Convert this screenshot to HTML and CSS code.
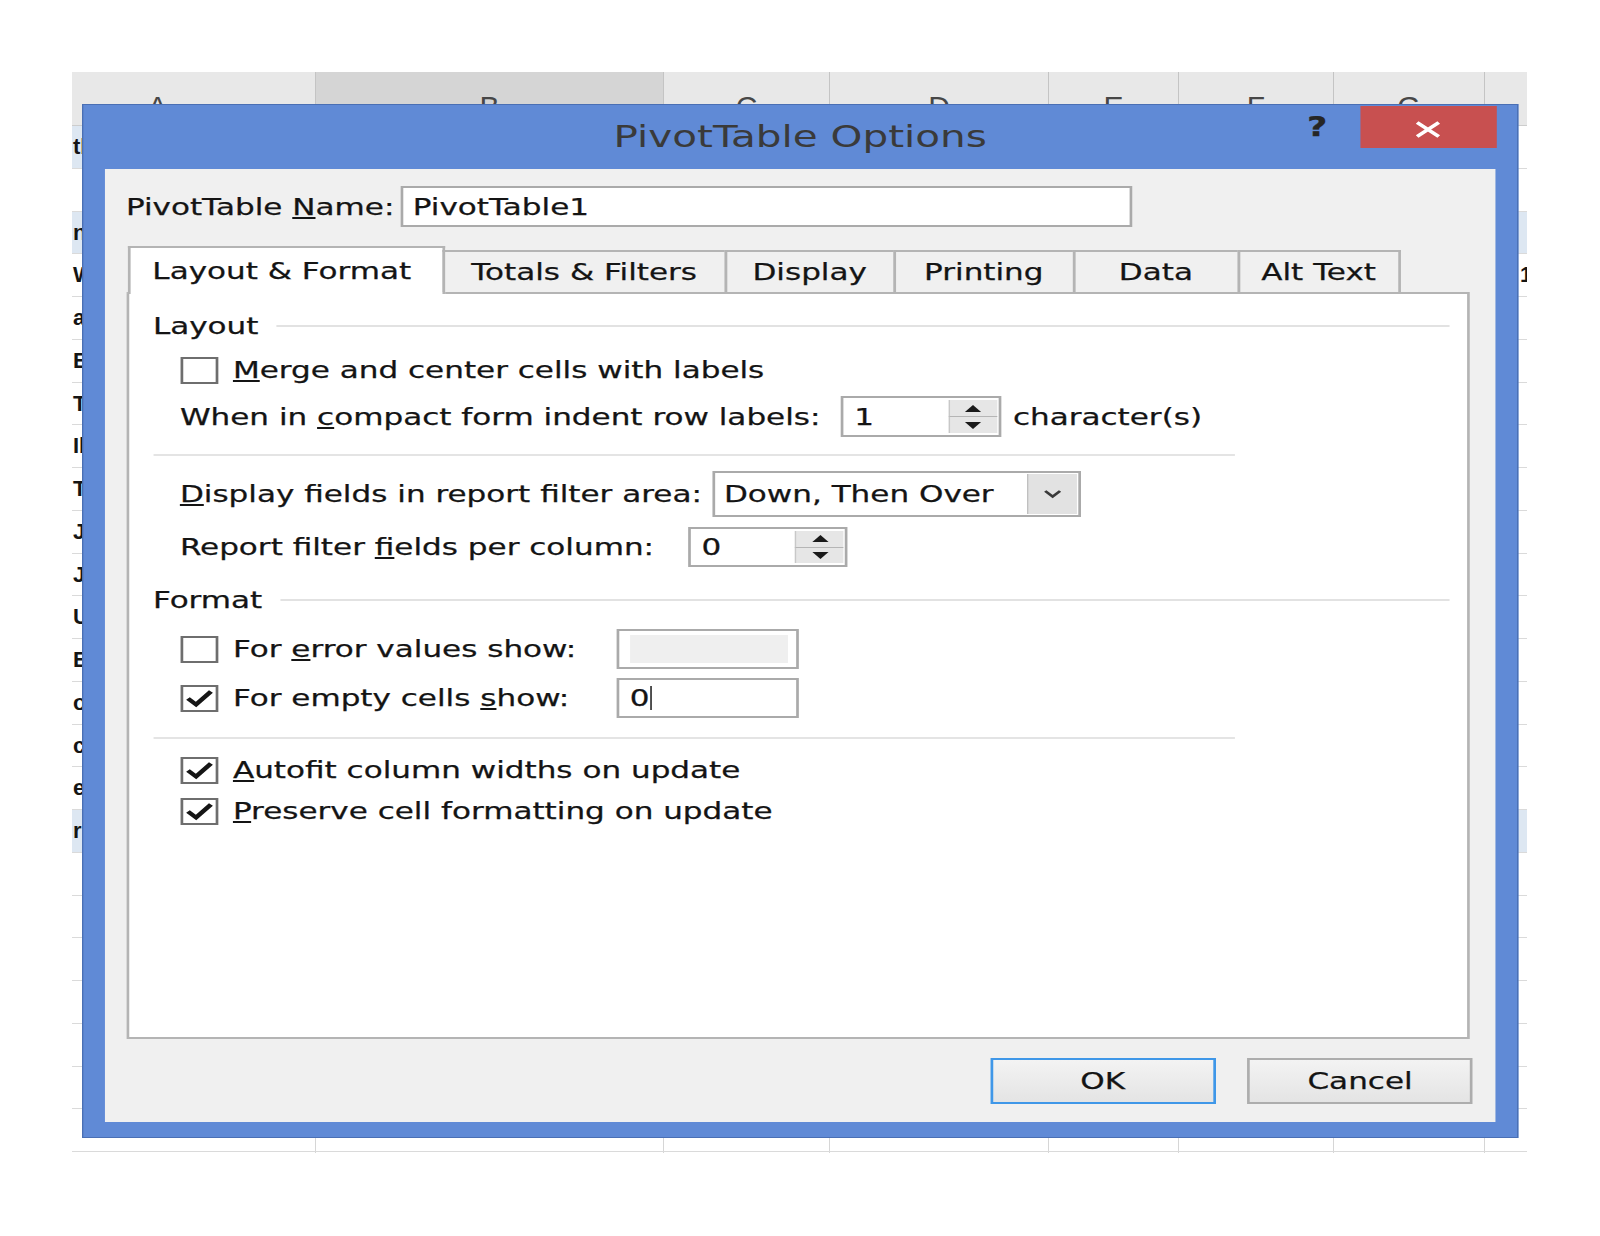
FILE: index.html
```html
<!DOCTYPE html>
<html lang="en">
<head>
<meta charset="utf-8">
<title>PivotTable Options</title>
<link rel="stylesheet" href="styles.css">
</head>
<body>
<div class="sheet">
  <div class="colheads">
    <div class="ch ch-a">A</div>
    <div class="ch ch-b">B</div>
    <div class="ch ch-c">C</div>
    <div class="ch ch-d">D</div>
    <div class="ch ch-e">E</div>
    <div class="ch ch-f">F</div>
    <div class="ch ch-g">G</div>
    <div class="ch ch-h"></div>
  </div>
  <div class="rows">
    <div class="row"><span class="cell-a fill">tbl</span></div>
    <div class="row"><span class="cell-a"></span></div>
    <div class="row sel"><span class="cell-a">nm</span></div>
    <div class="row"><span class="cell-a">Wk</span><span class="cell-h">1</span></div>
    <div class="row"><span class="cell-a">ab</span></div>
    <div class="row"><span class="cell-a">Eb</span></div>
    <div class="row"><span class="cell-a">Tb</span></div>
    <div class="row"><span class="cell-a">Ib</span></div>
    <div class="row"><span class="cell-a">Tb</span></div>
    <div class="row"><span class="cell-a">Jb</span></div>
    <div class="row"><span class="cell-a">Jb</span></div>
    <div class="row"><span class="cell-a">Ub</span></div>
    <div class="row"><span class="cell-a">Eb</span></div>
    <div class="row"><span class="cell-a">ob</span></div>
    <div class="row"><span class="cell-a">cb</span></div>
    <div class="row"><span class="cell-a">eb</span></div>
    <div class="row sel"><span class="cell-a">rb</span></div>
    <div class="row"></div>
    <div class="row"></div>
    <div class="row"></div>
    <div class="row"></div>
    <div class="row"></div>
    <div class="row"></div>
    <div class="row"></div>
  </div>
</div>

<div class="dialog">
  <div class="titlebar">
    <div class="title">PivotTable Options</div>
    <div class="tb-controls">
      <span class="help">?</span>
      <span class="close">
        <svg width="20" height="17" viewBox="0 0 20 17"><path d="M2 1.5 L18 15.5 M18 1.5 L2 15.5" stroke="#fff" stroke-width="3" fill="none"/></svg>
      </span>
    </div>
  </div>

  <div class="content">
    <div class="name-row">
      <span class="name-label">PivotTable <u>N</u>ame:</span>
      <div class="field name-input">PivotTable1</div>
    </div>

    <div class="tabs">
      <div class="tab active t-layout">Layout &amp; Format</div>
      <div class="tab t-totals">Totals &amp; Filters</div>
      <div class="tab t-display">Display</div>
      <div class="tab t-printing">Printing</div>
      <div class="tab t-data">Data</div>
      <div class="tab t-alt">Alt Text</div>
    </div>

    <div class="panel">
      <div class="group"><span>Layout</span><span class="group-line"></span></div>

      <div class="opt r-merge">
        <span class="cb"></span>
        <span class="cb-label"><u>M</u>erge and center cells with labels</span>
      </div>

      <div class="opt r-compact">
        <span class="lbl l-compact">When in <u>c</u>ompact form indent row labels:</span>
        <div class="field spin">
          <span class="spin-val">1</span>
          <span class="spin-btns"><span class="up"><i class="tri-up"></i></span><span class="down"><i class="tri-down"></i></span></span>
        </div>
        <span class="suffix">character(s)</span>
      </div>

      <div class="sep s-first"></div>

      <div class="opt r-display">
        <span class="lbl l-display"><u>D</u>isplay fields in report filter area:</span>
        <div class="field combo">
          <span class="combo-val">Down, Then Over</span>
          <span class="combo-btn"><svg width="14" height="10" viewBox="0 0 14 10"><path d="M1.5 2 L7 7.5 L12.5 2" stroke="#3a3a3a" stroke-width="2.4" fill="none"/></svg></span>
        </div>
      </div>

      <div class="opt r-report">
        <span class="lbl l-report">Report filter <u>f</u>ields per column:</span>
        <div class="field spin">
          <span class="spin-val">0</span>
          <span class="spin-btns"><span class="up"><i class="tri-up"></i></span><span class="down"><i class="tri-down"></i></span></span>
        </div>
      </div>

      <div class="group g-format"><span>Format</span><span class="group-line"></span></div>

      <div class="opt r-error">
        <span class="cb"></span>
        <span class="cb-label l-fmt">For <u>e</u>rror values show:</span>
        <div class="field small disabled"><span class="inner-disabled"></span></div>
      </div>

      <div class="opt r-empty">
        <span class="cb checked"><svg width="24" height="23" viewBox="0 0 24 23"><polyline points="3.5,11.5 9.5,17.5 20.5,4.5" stroke="#151515" stroke-width="3.8" fill="none"/></svg></span>
        <span class="cb-label l-fmt">For empty cells <u>s</u>how:</span>
        <div class="field small"><span class="val">0</span><span class="caret"></span></div>
      </div>

      <div class="sep s-second"></div>

      <div class="opt r-autofit">
        <span class="cb checked"><svg width="24" height="23" viewBox="0 0 24 23"><polyline points="3.5,11.5 9.5,17.5 20.5,4.5" stroke="#151515" stroke-width="3.8" fill="none"/></svg></span>
        <span class="cb-label"><u>A</u>utofit column widths on update</span>
      </div>

      <div class="opt r-preserve">
        <span class="cb checked"><svg width="24" height="23" viewBox="0 0 24 23"><polyline points="3.5,11.5 9.5,17.5 20.5,4.5" stroke="#151515" stroke-width="3.8" fill="none"/></svg></span>
        <span class="cb-label"><u>P</u>reserve cell formatting on update</span>
      </div>
    </div>

    <div class="actions">
      <button class="btn primary" type="button">OK</button>
      <button class="btn" type="button">Cancel</button>
    </div>
  </div>
</div>
</body>
</html>
```

FILE: styles.css
```css
* { box-sizing: border-box; }

html, body {
  margin: 0;
  padding: 0;
  background: #ffffff;
}

body {
  position: relative;
  width: 1600px;
  height: 1236px;
  overflow: hidden;
  font-family: "DejaVu Sans", "Liberation Sans", sans-serif;
}

/* ---------- spreadsheet behind the dialog ---------- */
.sheet {
  margin: 72px 0 0 72px;
  width: 1455px;
  height: 1081px;
  overflow: hidden;
  background: #ffffff;
  font-family: "Liberation Sans", Arial, sans-serif;
}

.colheads {
  display: flex;
  height: 54px;
  background: #e8e8e8;
  border-bottom: 1px solid #cdcdcd;
}

.ch {
  flex: none;
  height: 53px;
  border-right: 1px solid #c4c4c4;
  text-align: center;
  font-size: 30px;
  line-height: 30px;
  padding-top: 20px;
  color: #474747;
}
.ch-a { width: 244px; padding-right: 72px; }
.ch-b { width: 348px; background: #d5d5d5; }
.ch-c { width: 166px; }
.ch-d { width: 219px; }
.ch-e { width: 130px; }
.ch-f { width: 155px; }
.ch-g { width: 151px; }
.ch-h { width: 42px; border-right: none; }

.rows {
  height: 1027px;
  background-image:
    linear-gradient(#d6d6d6, #d6d6d6),
    linear-gradient(#d6d6d6, #d6d6d6),
    linear-gradient(#d6d6d6, #d6d6d6),
    linear-gradient(#d6d6d6, #d6d6d6),
    linear-gradient(#d6d6d6, #d6d6d6),
    linear-gradient(#d6d6d6, #d6d6d6),
    linear-gradient(#d6d6d6, #d6d6d6);
  background-size: 1px 100%;
  background-repeat: no-repeat;
  background-position: 243px 0, 591px 0, 757px 0, 976px 0, 1106px 0, 1261px 0, 1412px 0;
}

.row {
  display: flex;
  height: 42.75px;
  border-bottom: 1px solid #dadada;
}
.row.sel { background: #dde7f2; }

.cell-a {
  flex: none;
  width: 1413px;
  padding-left: 1px;
  font-weight: bold;
  font-size: 22px;
  line-height: 41px;
  color: #151515;
  white-space: nowrap;
  overflow: hidden;
}
.cell-a.fill { background: #dde7f2; }

.cell-h {
  padding-left: 35px;
  font-weight: bold;
  font-size: 22px;
  line-height: 41px;
  color: #151515;
}

/* ---------- dialog ---------- */
.dialog {
  position: absolute;
  left: 82px;
  top: 104px;
  width: 1064px;
  height: 1034px;
  transform: scaleX(1.35);
  transform-origin: 0 0;
  display: flex;
  flex-direction: column;
  background: #608ad6;
  border: 1px solid #4a6fb4;
  font-family: "DejaVu Sans", "Liberation Sans", sans-serif;
  font-size: 23px;
  color: #141414;
  -webkit-text-stroke: 0.25px currentColor;
}

.titlebar {
  flex: none;
  height: 64px;
  display: grid;
  grid-template-columns: 1fr auto 1fr;
}

.title {
  grid-column: 2;
  align-self: center;
  font-size: 30px;
  line-height: 36px;
  color: #3a3a3a;
  white-space: nowrap;
  -webkit-text-stroke: 0;
}

.tb-controls {
  grid-column: 3;
  justify-self: end;
  display: flex;
  align-items: flex-start;
  padding-right: 15px;
}

.help {
  margin-top: 9px;
  margin-right: 24px;
  font-weight: bold;
  font-size: 26px;
  line-height: 26px;
  color: #262626;
}

.close {
  margin-top: 1px;
  width: 101.5px;
  height: 42px;
  background: #c85050;
  display: flex;
  align-items: center;
  justify-content: center;
  padding-top: 4px;
}

.content {
  flex: 1;
  margin: 0 16px 15px 16px;
  background: #f0f0f0;
  padding: 17px 0 0 15.5px;
  display: flex;
  flex-direction: column;
}

.field {
  background: #ffffff;
  border: 2px solid #aaaaaa;
  display: flex;
  align-items: center;
}

.name-row {
  display: flex;
  align-items: center;
  height: 41px;
}
.name-label {
  flex: 0 0 203.5px;
  white-space: nowrap;
}
.name-input {
  width: 542px;
  height: 41px;
  padding-left: 7px;
}

/* tabs */
.tabs {
  position: relative;
  z-index: 1;
  display: flex;
  align-items: flex-end;
  height: 46px;
  margin-top: 19px;
  margin-left: 1px;
}

.tab {
  flex: none;
  height: 42px;
  margin-left: -2px;
  border: 2px solid #b4b4b4;
  border-bottom: none;
  background: #f0f0f0;
  display: flex;
  align-items: center;
  justify-content: center;
  white-space: nowrap;
}
.tab.active {
  height: 48px;
  margin-left: 0;
  margin-bottom: -2px;
  background: #ffffff;
  padding-right: 6px;
}
.t-layout { width: 235px; }
.t-totals { width: 211px; }
.t-display { width: 127px; }
.t-printing { width: 135px; }
.t-data { width: 124px; }
.t-alt { width: 121px; }

.panel {
  flex: none;
  width: 995px;
  height: 747px;
  background: #ffffff;
  border: 2px solid #b4b4b4;
  padding: 18px 13px 0 18px;
}

.group {
  display: flex;
  align-items: center;
  height: 28px;
}
.group-line {
  flex: 1;
  height: 2px;
  margin-left: 13px;
  background: #e2e2e2;
}
.g-format { margin-top: 19px; }

.opt {
  display: flex;
  align-items: center;
  margin-left: 20px;
  white-space: nowrap;
}
.r-merge { margin-top: 14px; height: 32px; }
.r-compact { margin-top: 10px; height: 41px; }
.r-display { margin-top: 15px; height: 46px; }
.r-report { margin-top: 10px; height: 40px; }
.r-error { margin-top: 15px; height: 40px; }
.r-empty { margin-top: 9px; height: 40px; }
.r-autofit { margin-top: 15px; height: 32px; }
.r-preserve { margin-top: 9px; height: 32px; }

.sep {
  width: 801px;
  height: 2px;
  margin-left: 0.5px;
  background: #e4e4e4;
}
.s-first { margin-top: 17px; }
.s-second { margin-top: 19px; }

/* checkbox */
.cb {
  flex: none;
  width: 28px;
  height: 27px;
  border: 2px solid #6e6e6e;
  background: #ffffff;
  display: flex;
}
.cb-label { margin-left: 11.3px; }
.l-fmt { width: 284.4px; }

.lbl { flex: none; }
.l-compact { width: 489.6px; }
.l-display { width: 394px; }
.l-report { width: 376.3px; }

/* spin box */
.spin {
  width: 118.5px;
  height: 100%;
  padding: 0 1px 0 8px;
}
.spin-val { flex: 1; }
.spin-btns {
  width: 36px;
  height: 100%;
  display: flex;
  flex-direction: column;
  padding: 2px 0;
}
.spin-btns .up,
.spin-btns .down {
  flex: 1;
  display: flex;
  align-items: center;
  justify-content: center;
  background: #e6e6e6;
  border-left: 1.5px solid #c8c8c8;
}
.spin-btns .up { border-bottom: 1.5px solid #b5b5b5; }
.tri-up {
  width: 0;
  height: 0;
  border-left: 6px solid transparent;
  border-right: 6px solid transparent;
  border-bottom: 7px solid #1a1a1a;
}
.tri-down {
  width: 0;
  height: 0;
  border-left: 6px solid transparent;
  border-right: 6px solid transparent;
  border-top: 7px solid #1a1a1a;
}
.suffix { margin-left: 9px; }

/* combo */
.combo {
  width: 273px;
  height: 100%;
  padding: 0 1px 0 7px;
}
.combo-val { flex: 1; }
.combo-btn {
  width: 37px;
  height: calc(100% - 2px);
  margin: 1px 0;
  display: flex;
  align-items: center;
  justify-content: center;
  background: #e2e2e2;
  border-left: 1.5px solid #c0c0c0;
}

/* small text boxes */
.small {
  width: 135px;
  height: 100%;
  padding: 4px 6px 4px 7.6px;
}
.inner-disabled {
  flex: 1;
  height: 100%;
  background: #efefef;
}
.caret {
  width: 0;
  height: 24px;
  border-left: 1.5px solid #000000;
  margin-left: 0.5px;
}

/* buttons */
.actions {
  display: flex;
  margin-top: 19px;
  margin-left: 640px;
  gap: 23.7px;
}
.btn {
  width: 167px;
  height: 46px;
  margin: 0;
  padding: 0;
  border: 2px solid #adadad;
  background: linear-gradient(#f3f3f3, #e4e4e4);
  font-family: "DejaVu Sans", "Liberation Sans", sans-serif;
  font-size: 23px;
  color: #141414;
  -webkit-text-stroke: 0.25px currentColor;
}
.btn.primary { border-color: #3f97e8; }
```
